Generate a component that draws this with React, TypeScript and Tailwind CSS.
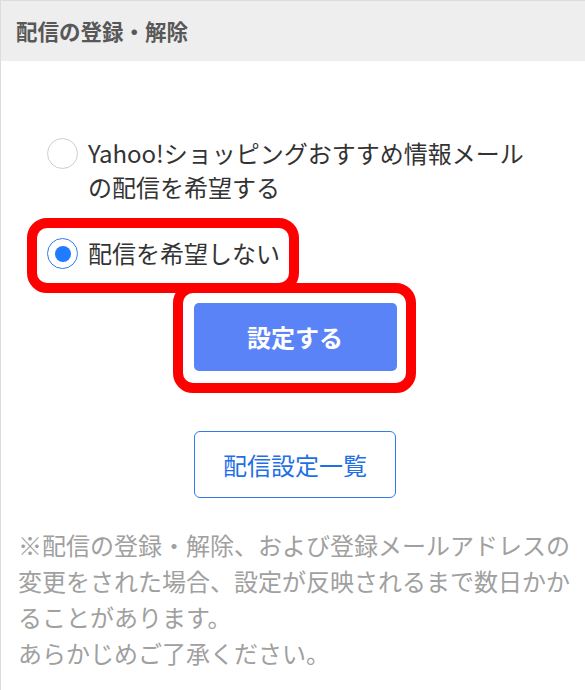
import React from "react";

export default function App() {
  return (
    <div className="relative w-[585px] min-h-[690px] border-l border-t border-[#dcdcdc] bg-white font-['Noto_Sans_CJK_JP','Noto_Sans',sans-serif]">
      <div className="flex h-[60px] items-center bg-[#eeeeee] pl-[15px] text-[21.5px] font-bold text-[#585858]">
        配信の登録・解除
      </div>

      <div className="pl-[46px] pt-[75px] text-[24px] leading-[34px] text-[#333]">
        <label className="flex items-start gap-[10px]">
          <span className="mt-[2px] h-[31px] w-[31px] shrink-0 rounded-full border border-[#c9ced8] bg-white" />
          <span>
            Yahoo!ショッピングおすすめ情報メール
            <br />
            の配信を希望する
          </span>
        </label>
        <label className="mt-[32px] flex items-start gap-[10px]">
          <span className="mt-[2px] flex h-[31px] w-[31px] shrink-0 items-center justify-center rounded-full border border-[#2d7df4] bg-white">
            <span className="h-[16px] w-[16px] rounded-full bg-[#1f7bff]" />
          </span>
          <span>配信を希望しない</span>
        </label>
      </div>

      <div className="mt-[33px] flex justify-center pl-[4px]">
        <button className="flex h-[68px] w-[203px] items-center justify-center rounded-[5px] bg-[#5a83f8] text-[24px] font-bold text-white">
          設定する
        </button>
      </div>

      <div className="mt-[60px] flex justify-center pl-[4px]">
        <a className="flex h-[67px] w-[202px] items-center justify-center rounded-[6px] border border-[#2f7bf0] text-[24px] text-[#1f6fe6]">
          配信設定一覧
        </a>
      </div>

      <p className="mt-[29px] w-[577px] pl-[17px] text-[24px] leading-[36px] text-[#a0a0a0]">
        ※配信の登録・解除、および登録メールアドレスの変更をされた場合、設定が反映されるまで数日かかることがあります。
        <br />
        あらかじめご了承ください。
      </p>

      <div className="pointer-events-none absolute left-[26px] top-[217px] h-[75px] w-[272px] rounded-[20px] border-[10px] border-[#ff0000]" />
      <div className="pointer-events-none absolute left-[172px] top-[282px] h-[110px] w-[243px] rounded-[20px] border-[10px] border-[#ff0000]" />
    </div>
  );
}
